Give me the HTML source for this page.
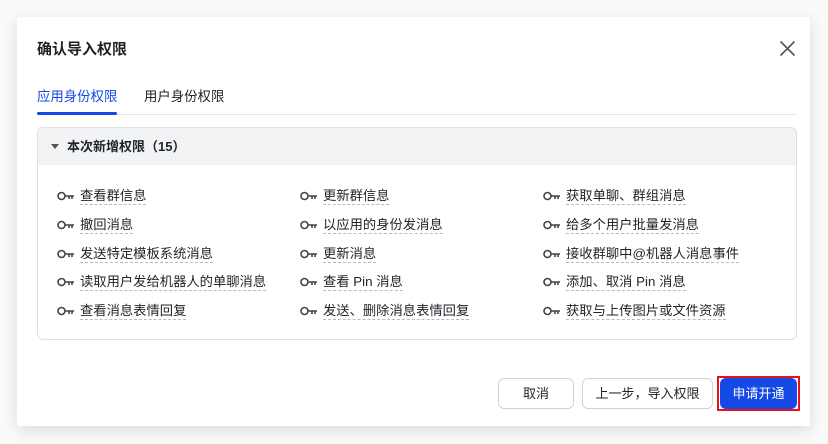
<!DOCTYPE html>
<html><head><meta charset="utf-8"><style>
*{margin:0;padding:0;box-sizing:border-box}
body{width:828px;height:444px;background:#fafafa;font-family:"Liberation Sans","Noto Sans CJK SC",sans-serif;position:relative;overflow:hidden;color:#1f2329}
.m{position:absolute;left:17px;top:17px;width:793px;height:409px;background:#fff;border-radius:2px;box-shadow:0 4px 16px rgba(0,0,0,.13)}
.t{position:absolute;left:37px;top:38px;font-size:15px;font-weight:bold}
.x{position:absolute;left:779px;top:40px}
.tab{position:absolute;top:85px;font-size:13.4px}
.ul{position:absolute;left:37px;top:112px;width:80px;height:3px;background:#1449e6;border-radius:2px}
.dv{position:absolute;left:37px;top:114px;width:760px;height:1px;background:#e5e6eb}
.box{position:absolute;left:37px;top:127px;width:760px;height:213px;border:1px solid #dee0e3;border-radius:6px;overflow:hidden}
.hd{height:37px;background:#f2f3f5;font-size:13px;font-weight:bold;padding-left:29px;line-height:37px;position:relative}
.hd:before{content:"";position:absolute;left:13px;top:16px;border-left:4px solid transparent;border-right:4px solid transparent;border-top:5px solid #555}
.it{position:absolute;font-size:13.3px;line-height:18px;display:flex;align-items:center}
.it svg{margin-right:5px}
.it span{border-bottom:1px dashed #bbb;line-height:17px}
.b{position:absolute;top:378px;height:31px;border:1px solid #d0d3d6;border-radius:6px;font-size:13px;text-align:center;line-height:29px;background:#fff}
</style></head><body>
<div class="m"></div>
<div class="t">确认导入权限</div>
<svg class="x" width="17" height="17" viewBox="0 0 17 17"><path d="M1.5 1.5L15.5 15.5M15.5 1.5L1.5 15.5" stroke="#555" stroke-width="1.6"/></svg>
<div class="tab" style="left:37px;color:#1449e6">应用身份权限</div>
<div class="tab" style="left:144px">用户身份权限</div>
<div class="dv"></div><div class="ul"></div>
<div class="box"><div class="hd">本次新增权限（15）</div></div>
<div id="items"></div>
<div class="b" style="left:498px;width:76px">取消</div>
<div class="b" style="left:582px;width:131px">上一步，导入权限</div>
<div style="position:absolute;left:717px;top:376px;width:83px;height:35px;border:2px solid #e5141b"></div>
<div class="b" style="left:720px;width:77px;background:#1449e6;border-color:#1449e6;color:#fff">申请开通</div>
<script>
var d=[["查看群信息","更新群信息","获取单聊、群组消息"],["撤回消息","以应用的身份发消息","给多个用户批量发消息"],["发送特定模板系统消息","更新消息","接收群聊中@机器人消息事件"],["读取用户发给机器人的单聊消息","查看 Pin 消息","添加、取消 Pin 消息"],["查看消息表情回复","发送、删除消息表情回复","获取与上传图片或文件资源"]];
var xs=[57,300,543],h="";
var k='<svg width="18" height="10" viewBox="0 0 18 10"><circle cx="4.5" cy="5" r="3.5" fill="none" stroke="#444" stroke-width="1.6"/><path d="M8 5H17M12 5V8M15 5V8" stroke="#444" stroke-width="1.6"/></svg>';
for(var r=0;r<5;r++)for(var c=0;c<3;c++)h+='<div class="it" style="left:'+xs[c]+'px;top:'+(187+r*28.8)+'px">'+k+'<span>'+d[r][c]+'</span></div>';
document.getElementById("items").innerHTML=h;
</script>
</body></html>
